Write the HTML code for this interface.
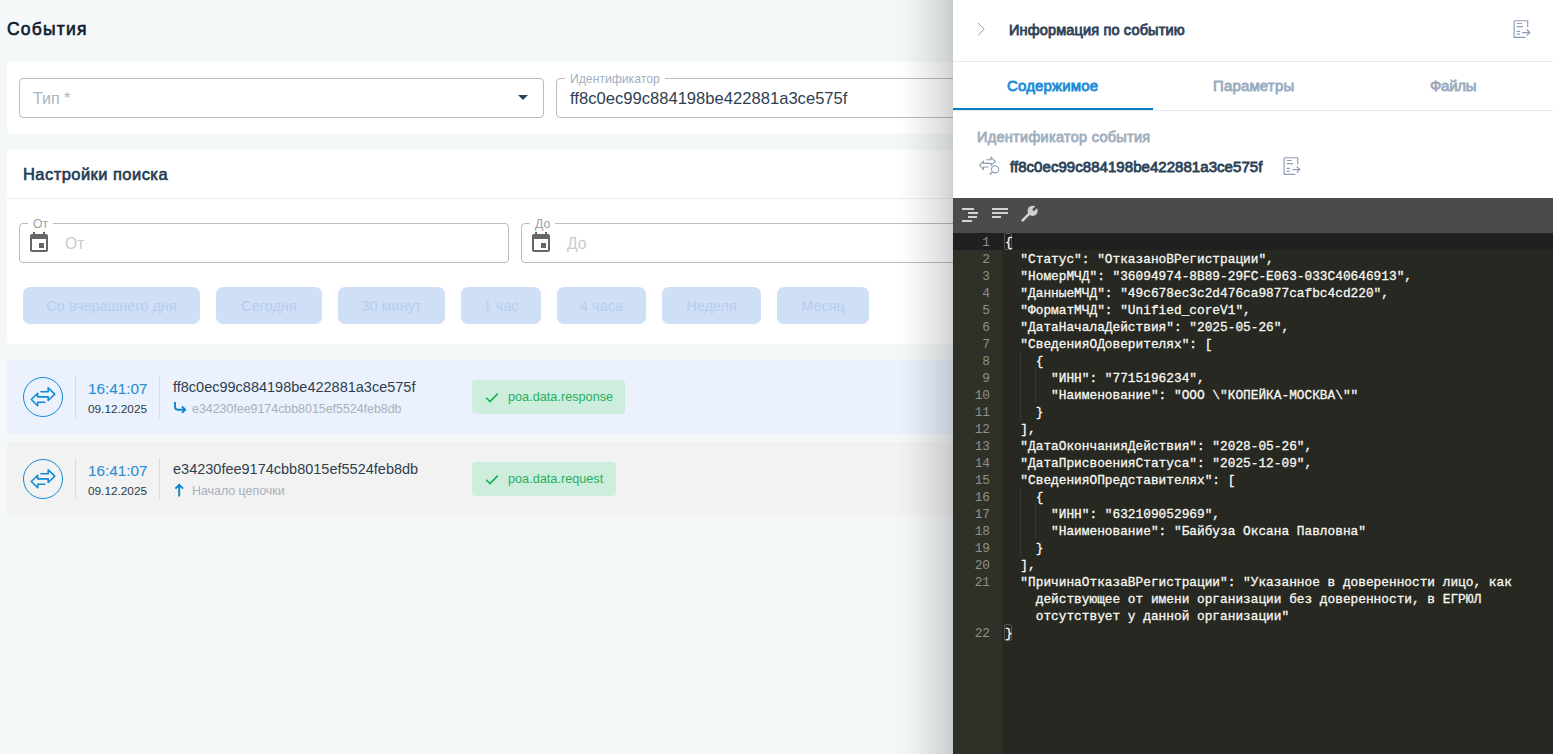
<!DOCTYPE html>
<html><head><meta charset="utf-8">
<style>
*{box-sizing:border-box;margin:0;padding:0}
html,body{width:1553px;height:754px;overflow:hidden;background:#f4f8f9;font-family:"Liberation Sans",sans-serif;position:relative}
.abs{position:absolute;white-space:nowrap;line-height:1}
.title{left:7px;top:21px;font-size:17.5px;-webkit-text-stroke:0.6px #0e1a2f;letter-spacing:1.2px;color:#0e1a2f}
.card{background:#fff;border-radius:4px}
.inp{border:1px solid #bcbcbc;border-radius:4px;background:#fff}
.lbl{font-size:12.2px;background:#fff;padding:0 5px;line-height:12px}
.btn{background:#cfdff6;border-radius:7px;color:#b8cdf0;font-size:14.5px;text-align:center;line-height:39px;height:37px;top:287px}
.row{left:7px;width:946px;height:74px;border-radius:4px}
.circle{width:40px;height:40px;border:1px solid #138bd6;border-radius:50%}
.vdiv{width:1px;background:#d7dde3;height:42px}
.time{font-size:15.3px;color:#2a8ed5;-webkit-text-stroke:0.1px #2a8ed5}
.date{font-size:11.8px;color:#2b3a4c}
.idt{font-size:14.5px;color:#2f3e4f}
.sub{font-size:12.4px;color:#a6b1bf}
.badge{background:#cdeedc;border-radius:4px;height:34px;color:#27ae63;font-size:12.7px}
.badge span{position:absolute;left:36px;top:11px}
.panel{left:953px;top:0;width:600px;height:754px;background:#fff}
.shadow{left:873px;top:0;width:80px;height:754px;background:linear-gradient(to right,rgba(0,0,0,0) 0px,rgba(0,0,0,0.000) 20px,rgba(0,0,0,0.006) 27px,rgba(0,0,0,0.020) 35px,rgba(0,0,0,0.040) 43px,rgba(0,0,0,0.065) 51px,rgba(0,0,0,0.090) 59px,rgba(0,0,0,0.120) 67px,rgba(0,0,0,0.150) 74px,rgba(0,0,0,0.175) 79px,rgba(0,0,0,0.200) 80px)}
.ed{left:953px;top:198px;width:600px;height:556px;background:#272822}
.tb{left:953px;top:198px;width:600px;height:35px;background:#4b4b4b}
.gut{left:953px;top:233px;width:49px;height:521px;background:#2f3129}
.code{font-family:"Liberation Mono",monospace;font-size:12.8px;line-height:17px;color:#f8f8f2;white-space:pre;-webkit-text-stroke:0.3px #f8f8f2}
.ln{font-family:"Liberation Mono",monospace;font-size:12.8px;line-height:17px;color:#8f908a;text-align:right;width:37px;white-space:pre}
.tab{font-size:15px;-webkit-text-stroke:0.8px currentColor;letter-spacing:0.15px;top:78px}
</style></head><body>
<div class="abs title">События</div>

<!-- card 1 -->
<div class="abs card" style="left:7px;top:62px;width:960px;height:72px"></div>
<div class="abs inp" style="left:19px;top:78px;width:525px;height:40px"></div>
<div class="abs" style="left:33px;top:91px;font-size:16px;color:#a9b5c3">Тип *</div>
<div class="abs" style="left:518px;top:95px;width:0;height:0;border-left:5px solid transparent;border-right:5px solid transparent;border-top:5px solid #2a4157"></div>
<div class="abs inp" style="left:556px;top:78px;width:420px;height:40px"></div>
<div class="abs lbl" style="left:565px;top:73px;color:#a2b0c0">Идентификатор</div>
<div class="abs" style="left:570px;top:91px;font-size:16.6px;color:#2e3f51">ff8c0ec99c884198be422881a3ce575f</div>

<!-- card 2 -->
<div class="abs card" style="left:7px;top:150px;width:960px;height:194px"></div>
<div class="abs" style="left:23px;top:166px;font-size:16.5px;-webkit-text-stroke:0.6px #223a52;letter-spacing:0.45px;color:#223a52">Настройки поиска</div>
<div class="abs" style="left:7px;top:198px;width:960px;height:1px;background:#eceff2"></div>
<div class="abs inp" style="left:19px;top:223px;width:490px;height:40px"></div>
<div class="abs lbl" style="left:28px;top:218px;color:#9e9e9e">От</div>
<div class="abs inp" style="left:521px;top:223px;width:460px;height:40px"></div>
<div class="abs lbl" style="left:530px;top:218px;color:#9e9e9e">До</div>
<div class="abs" style="left:65px;top:236px;font-size:15.6px;color:#c8cbcf">От</div>
<div class="abs" style="left:567px;top:236px;font-size:15.6px;color:#c8cbcf">До</div>
<svg class="abs" style="left:27px;top:231px" width="24" height="24" viewBox="0 0 24 24"><path fill="#666" d="M17 12h-5v5h5v-5zM16 1v2H8V1H6v2H5c-1.11 0-1.99.9-1.99 2L3 19c0 1.1.89 2 2 2h14c1.1 0 2-.9 2-2V5c0-1.1-.9-2-2-2h-1V1h-2zm3 18H5V8h14v11z"/></svg>
<svg class="abs" style="left:529px;top:231px" width="24" height="24" viewBox="0 0 24 24"><path fill="#666" d="M17 12h-5v5h5v-5zM16 1v2H8V1H6v2H5c-1.11 0-1.990.9-1.99 2L3 19c0 1.1.89 2 2 2h14c1.1 0 2-.9 2-2V5c0-1.1-.9-2-2-2h-1V1h-2zm3 18H5V8h14v11z"/></svg>

<div class="abs btn" style="left:23px;width:177px">Со вчерашнего дня</div>
<div class="abs btn" style="left:216px;width:106px">Сегодня</div>
<div class="abs btn" style="left:338px;width:107px">30 минут</div>
<div class="abs btn" style="left:461px;width:80px">1 час</div>
<div class="abs btn" style="left:557px;width:89px">4 часа</div>
<div class="abs btn" style="left:662px;width:99px">Неделя</div>
<div class="abs btn" style="left:777px;width:92px">Месяц</div>

<!-- rows -->
<div class="abs row" style="top:360px;background:#ebf2fd"></div>
<div class="abs row" style="top:442px;background:#f2f2f2"></div>

<div class="abs circle" style="left:23px;top:377px"></div>
<div class="abs circle" style="left:23px;top:459px"></div>
<svg class="abs" style="left:18px;top:372px" width="50" height="50" viewBox="0 0 50 50"><path d="M22.9 19.7H30.2V15.9L36.8 22.2L30.2 28.5V24.9H19.7V21.2L13.3 27.5L19.7 33.8V30.2H26.9" fill="none" stroke="#138bd6" stroke-width="1.6" stroke-linejoin="round" stroke-linecap="round"/></svg>
<svg class="abs" style="left:18px;top:454px" width="50" height="50" viewBox="0 0 50 50"><path d="M22.9 19.7H30.2V15.9L36.8 22.2L30.2 28.5V24.9H19.7V21.2L13.3 27.5L19.7 33.8V30.2H26.9" fill="none" stroke="#138bd6" stroke-width="1.6" stroke-linejoin="round" stroke-linecap="round"/></svg>
<div class="abs vdiv" style="left:75px;top:376px"></div>
<div class="abs vdiv" style="left:159px;top:376px"></div>
<div class="abs vdiv" style="left:75px;top:458px"></div>
<div class="abs vdiv" style="left:159px;top:458px"></div>
<div class="abs time" style="left:88px;top:381px">16:41:07</div>
<div class="abs date" style="left:88px;top:404px">09.12.2025</div>
<div class="abs time" style="left:88px;top:463px">16:41:07</div>
<div class="abs date" style="left:88px;top:486px">09.12.2025</div>
<div class="abs idt" style="left:173px;top:380px">ff8c0ec99c884198be422881a3ce575f</div>
<div class="abs sub" style="left:192px;top:403px">e34230fee9174cbb8015ef5524feb8db</div>
<div class="abs idt" style="left:173px;top:462px">e34230fee9174cbb8015ef5524feb8db</div>
<div class="abs sub" style="left:192px;top:485px">Начало цепочки</div>
<svg class="abs" style="left:168px;top:396px" width="24" height="24" viewBox="0 0 24 24"><path d="M7 6V10.8Q7 13.7 9.9 13.7H16.5" fill="none" stroke="#0a86d0" stroke-width="1.9"/><path d="M14 10.5L17.2 13.7L14 16.9" fill="none" stroke="#0a86d0" stroke-width="1.9"/></svg>
<svg class="abs" style="left:168px;top:478px" width="24" height="24" viewBox="0 0 24 24"><path d="M11.2 18.5V7.2M7.4 10.7L11.2 6.9L15 10.7" fill="none" stroke="#0a86d0" stroke-width="1.9"/></svg>
<div class="abs badge" style="left:472px;top:380px;width:153px"><span>poa.data.response</span></div>
<div class="abs badge" style="left:472px;top:462px;width:144px"><span>poa.data.request</span></div>
<svg class="abs" style="left:472px;top:380px" width="34" height="34" viewBox="0 0 34 34"><path d="M14.2 17.8L18 21.5L25.8 13.6" fill="none" stroke="#12b04f" stroke-width="1.6"/></svg>
<svg class="abs" style="left:472px;top:462px" width="34" height="34" viewBox="0 0 34 34"><path d="M14.2 17.8L18 21.5L25.8 13.6" fill="none" stroke="#12b04f" stroke-width="1.6"/></svg>

<!-- right panel -->
<div class="abs shadow"></div>
<div class="abs panel"></div>
<svg class="abs" style="left:970px;top:16px" width="20" height="26" viewBox="0 0 20 26"><path d="M8 7L14.2 13.2L8 19.4" fill="none" stroke="#8e9bb0" stroke-width="1"/></svg>
<div class="abs" style="left:1009px;top:23px;font-size:14.5px;-webkit-text-stroke:0.8px #2d4257;letter-spacing:0.15px;color:#2d4257">Информация по событию</div>
<svg class="abs" style="left:1505px;top:12px" width="36" height="32" viewBox="0 0 36 32"><path d="M9.1 8.7V25.3H20.4M9.1 8.7H22.7V15.3M11.7 11.5H16.8M11.7 14.6H18M11.7 19.3H14.9M11.7 22.1H14.9M17.2 20.6H24.8M21.7 17.5L24.8 20.6L21.7 23.7" fill="none" stroke="#8a9db3" stroke-width="1.15"/></svg>
<div class="abs" style="left:953px;top:61px;width:600px;height:1px;background:#e8ebee"></div>
<div class="abs tab" style="left:1007px;color:#1d8ad6">Содержимое</div>
<div class="abs tab" style="left:1213px;color:#9aabbf">Параметры</div>
<div class="abs tab" style="left:1430px;color:#9aabbf;letter-spacing:-0.3px">Файлы</div>
<div class="abs" style="left:953px;top:110px;width:600px;height:1px;background:#e8ebee"></div>
<div class="abs" style="left:953px;top:108px;width:200px;height:2px;background:#0a7bc9"></div>
<div class="abs" style="left:977px;top:130px;font-size:14.5px;-webkit-text-stroke:0.8px #a1afbf;letter-spacing:0.28px;color:#a1afbf">Идентификатор события</div>
<svg class="abs" style="left:972px;top:150px" width="36" height="32" viewBox="0 0 36 32"><path d="M14.2 9.8H19.1V7.4L23.3 11.4L19.1 15.3V13.4H11.5V11.3L7.6 15.3L11.5 19.3V17H16.6" fill="none" stroke="#8a9db3" stroke-width="1.1"/><circle cx="23.1" cy="19.3" r="3.6" fill="none" stroke="#8a9db3" stroke-width="1.1"/><path d="M20.5 21.9L17.6 24.6" stroke="#8a9db3" stroke-width="1.3"/></svg>
<div class="abs" style="left:1010px;top:159px;font-size:15px;-webkit-text-stroke:0.8px #2d4257;letter-spacing:0.05px;color:#2d4257">ff8c0ec99c884198be422881a3ce575f</div>
<svg class="abs" style="left:1275px;top:149px" width="36" height="32" viewBox="0 0 36 32"><path d="M9.1 8.7V25.3H20.4M9.1 8.7H22.7V15.3M11.7 11.5H16.8M11.7 14.6H18M11.7 19.3H14.9M11.7 22.1H14.9M17.2 20.6H24.8M21.7 17.5L24.8 20.6L21.7 23.7" fill="none" stroke="#8a9db3" stroke-width="1.15"/></svg>

<div class="abs ed"></div>
<div class="abs tb"></div>
<div class="abs" style="left:962px;top:208px;width:12px;height:2px;background:#d2d2d2"></div>
<div class="abs" style="left:968px;top:212px;width:10px;height:2px;background:#d2d2d2"></div>
<div class="abs" style="left:968px;top:216px;width:9px;height:2px;background:#d2d2d2"></div>
<div class="abs" style="left:962px;top:220px;width:10px;height:2px;background:#d2d2d2"></div>
<div class="abs" style="left:992px;top:208px;width:16px;height:2px;background:#d2d2d2"></div>
<div class="abs" style="left:992px;top:212px;width:16px;height:2px;background:#d2d2d2"></div>
<div class="abs" style="left:992px;top:216px;width:9px;height:2px;background:#d2d2d2"></div>
<svg class="abs" style="left:1015px;top:200px" width="30" height="30" viewBox="0 0 30 30"><path d="M7.6 20.4L15.2 12.8" stroke="#cfcfcf" stroke-width="2.7" stroke-linecap="round"/><circle cx="17.6" cy="10.8" r="5.1" fill="#cfcfcf"/><path d="M18 10.4L22.5 5.9" stroke="#4b4b4b" stroke-width="2.5"/></svg>
<div class="abs gut"></div>
<div class="abs" style="left:953px;top:233px;width:600px;height:17px;background:#202020"></div>
<div class="abs" style="left:1004px;top:233px;width:8px;height:17px;border:1px solid #55554f;border-radius:2px"></div>
<div class="abs" style="left:1004px;top:624px;width:8px;height:17px;border:1px solid #55554f;border-radius:2px"></div>
<div class="abs" style="left:1020px;top:352px;width:1px;height:68px;background:#37382f"></div>
<div class="abs" style="left:1035px;top:369px;width:1px;height:34px;background:#37382f"></div>
<div class="abs" style="left:1020px;top:488px;width:1px;height:68px;background:#37382f"></div>
<div class="abs" style="left:1035px;top:505px;width:1px;height:34px;background:#37382f"></div>

<div class="abs ln" style="left:953px;top:234px;line-height:17px">1
2
3
4
5
6
7
8
9
10
11
12
13
14
15
16
17
18
19
20
21


22</div>
<div class="abs code" style="left:1005px;top:234px;line-height:17px">{
  "Статус": "ОтказаноВРегистрации",
  "НомерМЧД": "36094974-8B89-29FC-E063-033C40646913",
  "ДанныеМЧД": "49c678ec3c2d476ca9877cafbc4cd220",
  "ФорматМЧД": "Unified_coreV1",
  "ДатаНачалаДействия": "2025-05-26",
  "СведенияОДоверителях": [
    {
      "ИНН": "7715196234",
      "Наименование": "ООО \"КОПЕЙКА-МОСКВА\""
    }
  ],
  "ДатаОкончанияДействия": "2028-05-26",
  "ДатаПрисвоенияСтатуса": "2025-12-09",
  "СведенияОПредставителях": [
    {
      "ИНН": "632109052969",
      "Наименование": "Байбуза Оксана Павловна"
    }
  ],
  "ПричинаОтказаВРегистрации": "Указанное в доверенности лицо, как
    действующее от имени организации без доверенности, в ЕГРЮЛ
    отсутствует у данной организации"
}</div>
</body></html>
